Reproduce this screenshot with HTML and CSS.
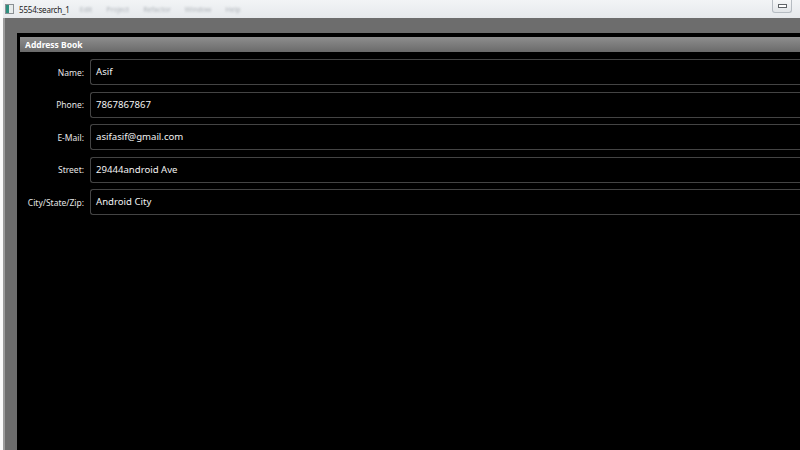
FILE: index.html
```html
<!DOCTYPE html>
<html lang="en">
  <head>
    <meta charset="UTF-8" />
    <title>5554:search_1</title>
    <link rel="stylesheet" href="styles.css">
  </head>
  <body>
    <div class="window">
      <div class="titlebar">
        <span class="app-icon"></span>
        <span class="title">5554:search_1</span>
        <span class="menu">
          <span>Edit</span><span>Project</span><span>Refactor</span><span>Window</span><span>Help</span>
        </span>
        <span class="win-btn"><span class="dash"></span></span>
      </div>
      <div class="frame">
        <div class="screen">
          <div class="app-title">Address Book</div>
          <div class="form">
            <div class="row">
              <label>Name:</label>
              <div class="field">Asif</div>
            </div>
            <div class="row">
              <label>Phone:</label>
              <div class="field">7867867867</div>
            </div>
            <div class="row">
              <label>E-Mail:</label>
              <div class="field">asifasif@gmail.com</div>
            </div>
            <div class="row">
              <label>Street:</label>
              <div class="field">29444android Ave</div>
            </div>
            <div class="row">
              <label>City/State/Zip:</label>
              <div class="field">Android City</div>
            </div>
          </div>
        </div>
      </div>
    </div>
  </body>
</html>
```

FILE: styles.css
```css
html, body {
  margin: 0;
  height: 100%;
  overflow: hidden;
  background: #f4f5f6;
  font-family: "Noto Sans", "DejaVu Sans", sans-serif;
}

.window {
  height: 450px;
  display: flex;
  flex-direction: column;
  border-left: 3px solid #fafafa;
  background: #dcdfe2;
}

.titlebar {
  height: 18px;
  display: flex;
  align-items: center;
  background: linear-gradient(#f2f4f6, #e6e9ec);
  font-size: 8px;
  color: #222;
  position: relative;
}

.app-icon {
  width: 7px;
  height: 8px;
  margin: 0 5px 0 2px;
  border: 1px solid #8a9094;
  background: linear-gradient(90deg, #2e8f7f 40%, #e8ecec 40%);
}

.title {
  letter-spacing: -0.2px;
}

.menu {
  display: flex;
  gap: 14px;
  margin-left: 10px;
  color: #b0b5ba;
  filter: blur(1.2px);
  font-size: 7px;
}

.win-btn {
  position: absolute;
  right: 8px;
  top: 0;
  width: 18px;
  height: 12px;
  border: 1px solid #b6bcc2;
  border-top: none;
  border-radius: 0 0 3px 3px;
  background: linear-gradient(#f6f7f8, #e2e5e8);
  display: flex;
  align-items: center;
  justify-content: center;
}

.win-btn .dash {
  width: 7px;
  height: 2px;
  border: 1px solid #606468;
  background: #fff;
}

.frame {
  flex: 1;
  background: #6d6d6d;
  border-left: 2px solid #9c9c9c;
  padding: 15px 0 0 12px;
  display: flex;
}

.screen {
  flex: 1;
  background: #000;
  border-top: 4px solid #000;
  border-left: 3px solid #000;
  display: flex;
  flex-direction: column;
}

.app-title {
  height: 15px;
  line-height: 15px;
  padding-left: 5px;
  background: linear-gradient(#8e8e8e, #6a6a6a);
  color: #fff;
  font-size: 8.5px;
  font-weight: bold;
}

.form {
  padding-top: 7px;
  display: flex;
  flex-direction: column;
  gap: 6.5px;
}

.row {
  display: flex;
  align-items: center;
}

.row label {
  width: 64px;
  padding-right: 6px;
  text-align: right;
  color: #e6e6e6;
  font-size: 8.5px;
}

.field {
  flex: 1;
  height: 24px;
  line-height: 24px;
  padding-left: 5px;
  border: 1px solid #444;
  border-right: none;
  border-radius: 3px 0 0 3px;
  color: #f2f2f2;
  font-size: 9.6px;
}
```
